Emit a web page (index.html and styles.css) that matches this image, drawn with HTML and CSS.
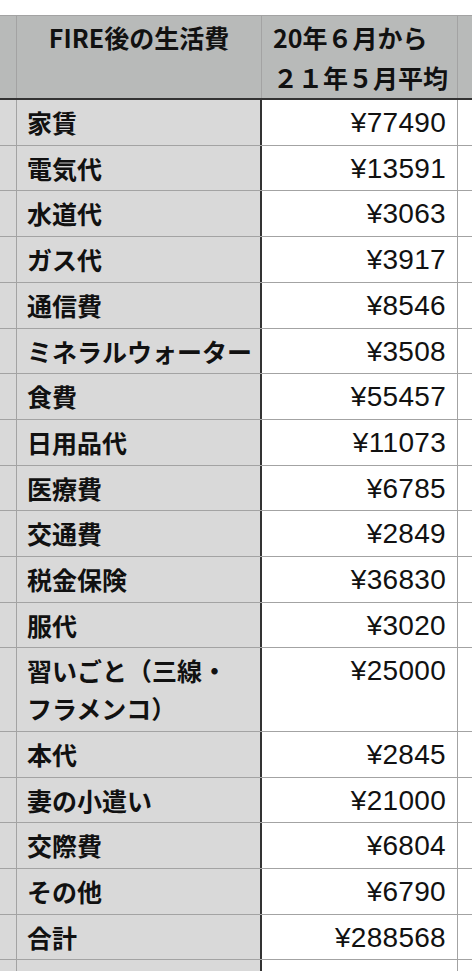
FILE: index.html
```html
<!DOCTYPE html>
<html lang="ja">
<head>
<meta charset="utf-8">
<link rel="stylesheet" href="styles.css">
</head>
<body>
<div class="sheet">
  <div class="row head">
    <div class="c a"></div>
    <div class="c b center">FIRE後の生活費</div>
    <div class="c v">20年６月から<br>２１年５月平均</div>
    <div class="c d"></div>
  </div>
  <div class="row"><div class="c a"></div><div class="c b">家賃</div><div class="c v num">¥77490</div><div class="c d"></div></div>
  <div class="row"><div class="c a"></div><div class="c b">電気代</div><div class="c v num">¥13591</div><div class="c d"></div></div>
  <div class="row"><div class="c a"></div><div class="c b">水道代</div><div class="c v num">¥3063</div><div class="c d"></div></div>
  <div class="row"><div class="c a"></div><div class="c b">ガス代</div><div class="c v num">¥3917</div><div class="c d"></div></div>
  <div class="row"><div class="c a"></div><div class="c b">通信費</div><div class="c v num">¥8546</div><div class="c d"></div></div>
  <div class="row"><div class="c a"></div><div class="c b">ミネラルウォーター</div><div class="c v num">¥3508</div><div class="c d"></div></div>
  <div class="row"><div class="c a"></div><div class="c b">食費</div><div class="c v num">¥55457</div><div class="c d"></div></div>
  <div class="row"><div class="c a"></div><div class="c b">日用品代</div><div class="c v num">¥11073</div><div class="c d"></div></div>
  <div class="row"><div class="c a"></div><div class="c b">医療費</div><div class="c v num">¥6785</div><div class="c d"></div></div>
  <div class="row"><div class="c a"></div><div class="c b">交通費</div><div class="c v num">¥2849</div><div class="c d"></div></div>
  <div class="row"><div class="c a"></div><div class="c b">税金保険</div><div class="c v num">¥36830</div><div class="c d"></div></div>
  <div class="row"><div class="c a"></div><div class="c b">服代</div><div class="c v num">¥3020</div><div class="c d"></div></div>
  <div class="row"><div class="c a"></div><div class="c b">習いごと（三線・<br>フラメンコ）</div><div class="c v num">¥25000</div><div class="c d"></div></div>
  <div class="row"><div class="c a"></div><div class="c b">本代</div><div class="c v num">¥2845</div><div class="c d"></div></div>
  <div class="row"><div class="c a"></div><div class="c b">妻の小遣い</div><div class="c v num">¥21000</div><div class="c d"></div></div>
  <div class="row"><div class="c a"></div><div class="c b">交際費</div><div class="c v num">¥6804</div><div class="c d"></div></div>
  <div class="row"><div class="c a"></div><div class="c b">その他</div><div class="c v num">¥6790</div><div class="c d"></div></div>
  <div class="row"><div class="c a"></div><div class="c b">合計</div><div class="c v num">¥288568</div><div class="c d"></div></div>
  <div class="row"><div class="c a"></div><div class="c b">&nbsp;</div><div class="c v num">&nbsp;</div><div class="c d"></div></div>
</div>
</body>
</html>
```

FILE: styles.css
```css
html, body {
  margin: 0;
  padding: 0;
  background: #ffffff;
}
body {
  padding-top: 15px;
  font-family: "Noto Sans CJK JP", "Noto Sans", sans-serif;
  color: #111111;
  overflow: hidden;
}
.sheet {
  width: 472px;
  border-top: 1px solid #a3a3a3;
}
.row {
  display: grid;
  grid-template-columns: 17px 245px 196px 14px;
  border-bottom: 1px solid #a3a3a3;
}
.c {
  box-sizing: border-box;
  padding: 4px 0 3px 0;
  line-height: 37.7px;
  font-size: 25px;
}
.a {
  background: #d9d9d9;
  border-right: 1px solid #a3a3a3;
}
.b {
  background: #d9d9d9;
  border-right: 2px solid #333333;
  padding-left: 10px;
  font-weight: 700;
  white-space: nowrap;
}
.v {
  background: #ffffff;
  border-right: 1px solid #a3a3a3;
}
.d {
  background: #ffffff;
}
.num {
  font-family: "Liberation Sans", Arial, sans-serif;
  font-size: 28px;
  text-align: right;
  padding-right: 11px;
  letter-spacing: 0.3px;
}
.head {
  border-bottom: 2px solid #333333;
}
.head .c {
  background: #b8bab9;
  font-weight: 700;
  padding: 1px 0 1px 0;
  line-height: 40px;
  min-height: 82px;
}
.head .b {
  border-right: 1px solid #a3a3a3;
  padding-left: 0;
}
.head .center {
  text-align: center;
}
.head .v {
  padding-left: 11px;
  white-space: nowrap;
}
```
